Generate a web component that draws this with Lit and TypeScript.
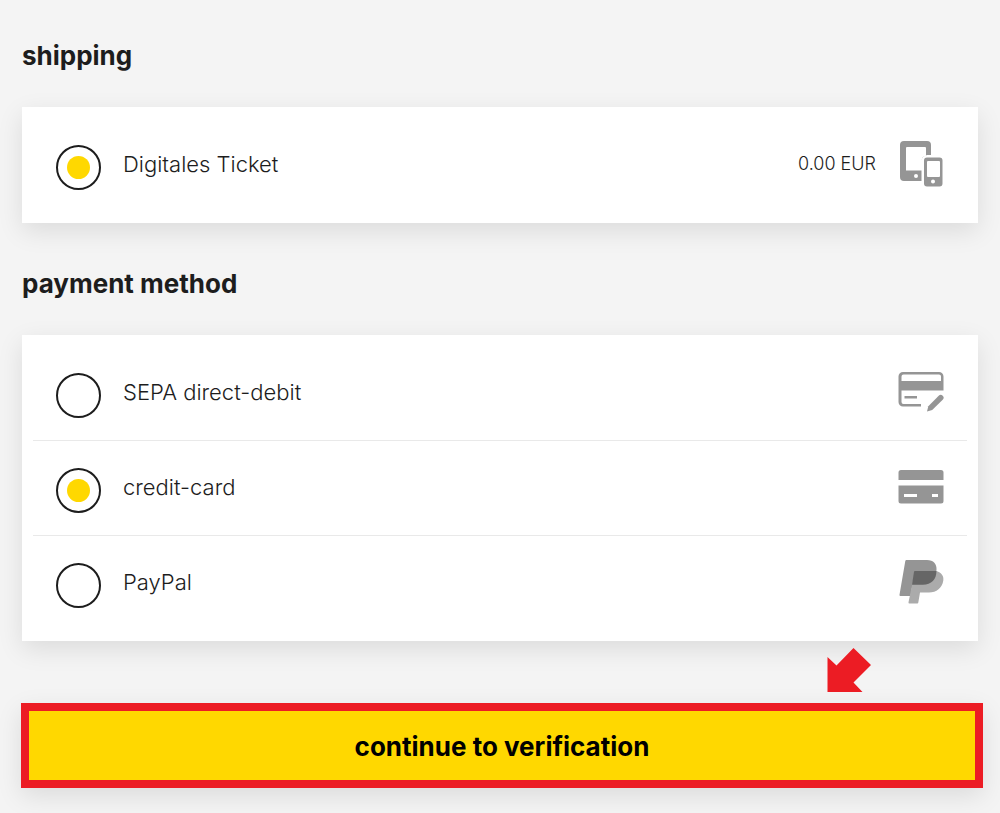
import { LitElement, html, css, svg } from "lit";
import { customElement, property, state } from "lit/decorators.js";

const devicesIcon = svg`
  <path fill-rule="evenodd" d="M6 0h23a4 4 0 0 1 4 4v10h-3.500a6 6 0 0 0-6 6v20H6a4 4 0 0 1-4-4V4a4 4 0 0 1 4-4zM9 6a1 1 0 0 0-1 1V29.500h15.500V20a6 6 0 0 1 4.500-5.800V7a1 1 0 0 0-1-1zM18 33a2 2 0 1 0 0 4a2 2 0 0 0 0-4z"/>
  <path fill-rule="evenodd" d="M29 16.500h12.500a3 3 0 0 1 3 3V42.500a3 3 0 0 1-3 3H29a3 3 0 0 1-3-3V19.500a3 3 0 0 1 3-3zM30 20a1 1 0 0 0-1 1v14a1 1 0 0 0 1 1h11a1 1 0 0 0 1-1V21a1 1 0 0 0-1-1zM35 38.500a2 2 0 1 0 0 4a2 2 0 0 0 0-4z"/>`;

const debitIcon = svg`
  <path fill-rule="evenodd" d="M5 3h36a4.500 4.500 0 0 1 4.500 4.500V21.500H3.500V33a2 2 0 0 0 2 2H23v2.500H5A4.500 4.500 0 0 1 .5 33V7.500A4.500 4.500 0 0 1 5 3zM5.500 5.500a2 2 0 0 0-2 2V12H43V7.500a2 2 0 0 0-2-2z"/>
  <path d="M6.500 27H19v2.500H6.500z"/>
  <path d="M29 42.500l1.300-5.200L40.700 26.700a2.800 2.800 0 0 1 4 4L34.200 41z"/>`;

const cardIcon = svg`
  <path d="M3 6h40a2.500 2.500 0 0 1 2.500 2.500V16H.5V8.500A2.500 2.500 0 0 1 3 6z"/>
  <path fill-rule="evenodd" d="M.5 21.500h45V37a2.500 2.500 0 0 1-2.500 2.500H3A2.500 2.500 0 0 1 .5 37zM6 30v3h13v-3zM34 30v3h6v-3z"/>`;

const paypalIcon = svg`
  <path d="M8.500 1H29c6.500 0 10 4 9.500 10l-1 5-5 7-8 2.500H14.500L12.500 37H2.500a1 1 0 0 1-1-1.200L7.300 2A1.200 1.200 0 0 1 8.500 1z"/>
  <path fill="#ababab" d="M17 12h21.500c5 1.500 7.500 5 6.800 9.500C44.200 29 38.500 33.500 31 33.500H22l-1.700 10a1 1 0 0 1-1 .9H11.500a1 1 0 0 1-1-1.200z"/>
  <path fill="#666" d="M17 12h21.400c.2 8.500-5 13.700-13.500 13.700H14L16 12.800A1 1 0 0 1 17 12z"/>`;

interface Option {
  id: string;
  label: string;
  price?: string;
  icon: unknown;
}

const shippingOptions: Option[] = [
  { id: "digital", label: "Digitales Ticket", price: "0.00 EUR", icon: devicesIcon },
];

const paymentOptions: Option[] = [
  { id: "sepa", label: "SEPA direct-debit", icon: debitIcon },
  { id: "card", label: "credit-card", icon: cardIcon },
  { id: "paypal", label: "PayPal", icon: paypalIcon },
];

@customElement("option-card")
class OptionCard extends LitElement {
  @property() name = "";
  @property() heading = "";
  @property() selected = "";
  @property({ attribute: false }) options: Option[] = [];

  static styles = css`
    :host {
      display: block;
    }
    .group {
      background: #fff;
      padding: 10px 11px 11px;
      box-shadow: 0 8px 24px rgba(0, 0, 0, 0.1);
    }
    .title {
      margin: 0 0 35px;
      font-size: 26px;
      line-height: 32px;
      font-weight: 700;
      color: #1d1d1d;
    }
    .row {
      display: flex;
      align-items: center;
      gap: 22px;
      box-sizing: border-box;
      min-height: 95px;
      padding: 0 23px 3px;
      border-top: 1px solid #e9e9e9;
      cursor: pointer;
    }
    .row:first-child {
      border-top-color: transparent;
    }
    .radio {
      appearance: none;
      flex: none;
      display: grid;
      place-items: center;
      box-sizing: border-box;
      width: 45px;
      height: 45px;
      margin: 8px 0 0;
      border: 2px solid #1d1d1d;
      border-radius: 50%;
      background: #fff;
    }
    .radio:checked::before {
      content: "";
      width: 23px;
      height: 23px;
      border-radius: 50%;
      background: #ffd800;
    }
    .label {
      flex: 1;
      font-size: 22px;
      line-height: 28px;
      font-weight: 300;
    }
    .price {
      font-size: 18px;
      line-height: 28px;
      font-weight: 300;
    }
    .icon {
      flex: none;
      display: block;
      width: 46px;
      height: 46px;
      fill: #959595;
    }
  `;

  render() {
    return html`
      <h2 class="title" id="title">${this.heading}</h2>
      <div class="group" role="radiogroup" aria-labelledby="title">
        ${this.options.map(
          (o) => html`
            <label class="row">
              <input
                class="radio"
                type="radio"
                name=${this.name}
                .value=${o.id}
                .checked=${o.id === this.selected}
                @change=${() => (this.selected = o.id)}
              />
              <span class="label">${o.label}</span>
              ${o.price ? html`<span class="price">${o.price}</span>` : ""}
              <svg class="icon" viewBox="0 0 46 46" aria-hidden="true">${o.icon}</svg>
            </label>
          `
        )}
      </div>
    `;
  }
}

@customElement("app-root")
class AppRoot extends LitElement {
  @state() shipping = "digital";
  @state() payment = "card";

  static styles = css`
    :host {
      display: block;
      box-sizing: border-box;
      min-height: 100vh;
      background: #f4f4f4;
      color: #1d1d1d;
      font-family: Inter, "Liberation Sans", sans-serif;
    }
    .page {
      display: flex;
      flex-direction: column;
      gap: 45px;
      padding: 40px 22px 25px;
    }
    .action {
      position: relative;
      margin: 17px -5px 0 -1px;
    }
    .submit {
      display: block;
      box-sizing: border-box;
      width: 100%;
      padding: 21px 20px 19px;
      border: 8px solid #ec1c24;
      border-radius: 0;
      background: #ffd800;
      box-shadow: 0 8px 24px rgba(0, 0, 0, 0.1);
      color: #000;
      font-family: inherit;
      font-size: 26px;
      line-height: 29px;
      font-weight: 700;
      cursor: pointer;
    }
    .arrow {
      position: absolute;
      right: 112px;
      bottom: calc(100% + 11px);
      width: 44px;
      height: 44px;
      fill: #ec1c24;
    }
  `;

  render() {
    return html`
      <main class="page">
        <option-card
          name="shipping"
          heading="shipping"
          .selected=${this.shipping}
          .options=${shippingOptions}
        ></option-card>
        <option-card
          name="payment"
          heading="payment method"
          .selected=${this.payment}
          .options=${paymentOptions}
        ></option-card>
        <div class="action">
          <svg class="arrow" viewBox="0 0 44 44" aria-hidden="true">
            <path d="M26.500 0L44 17 26.500 34.500 35.500 44H0.500V9L9.500 17.500z" />
          </svg>
          <button class="submit" type="button">continue to verification</button>
        </div>
      </main>
    `;
  }
}
